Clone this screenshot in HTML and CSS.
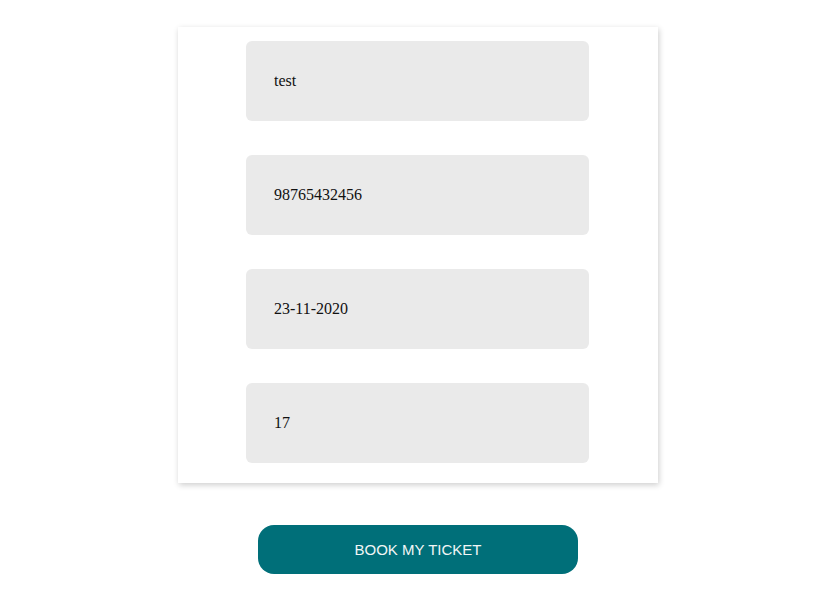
FILE: index.html
```html
<!DOCTYPE html>
<html>
<head>
<meta charset="utf-8">
<link rel="stylesheet" href="styles.css">
</head>
<body>
<div class="page">
  <form class="card">
    <input class="field" type="text" value="test">
    <input class="field" type="text" value="98765432456">
    <input class="field" type="text" value="23-11-2020">
    <input class="field" type="text" value="17">
  </form>
  <button class="book" type="button">BOOK MY TICKET</button>
</div>
</body>
</html>
```
FILE: styles.css
```css
html, body {
  margin: 0;
  padding: 0;
  background: #ffffff;
}
.page {
  display: flex;
  flex-direction: column;
  align-items: center;
  padding-top: 27px;
}
.card {
  width: 480px;
  box-sizing: border-box;
  background: #fff;
  box-shadow: 1px 2px 6px rgba(0, 0, 0, 0.2);
  padding: 14px 0 20px 68px;
  display: flex;
  flex-direction: column;
  align-items: flex-start;
  gap: 34px;
  margin-left: -2px;
}
.field {
  width: 343px;
  height: 80px;
  box-sizing: border-box;
  border: none;
  outline: none;
  border-radius: 6px;
  background: #eaeaea;
  padding: 0 0 0 28px;
  margin: 0;
  font-family: "Liberation Serif", serif;
  font-size: 16px;
  color: #111;
}
.book {
  margin-top: 42px;
  margin-left: -2px;
  width: 320px;
  height: 49px;
  border: none;
  border-radius: 16px;
  background: #006f79;
  color: #f2f6f6;
  font-family: "Liberation Sans", Arial, sans-serif;
  font-size: 15px;
  cursor: pointer;
}
```
